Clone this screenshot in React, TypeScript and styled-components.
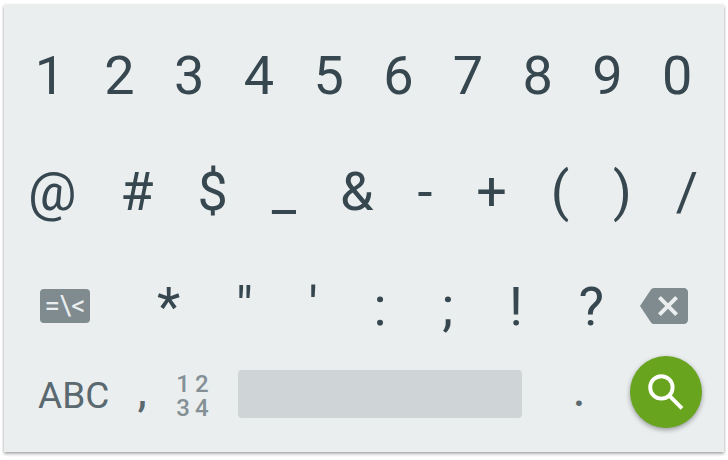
import React from "react";
import styled, { createGlobalStyle } from "styled-components";

const GlobalStyle = createGlobalStyle`
  * { box-sizing: border-box; }
  body {
    margin: 0;
    background: #ffffff;
    font-family: Roboto, "Liberation Sans", sans-serif;
  }
  button {
    margin: 0;
    padding: 0;
    border: 0;
    background: none;
    color: inherit;
    font: inherit;
    cursor: pointer;
  }
  svg { display: block; }
`;

const Keyboard = styled.main`
  display: flex;
  flex-direction: column;
  gap: 52px;
  margin: 5px 4px 8px;
  padding: 39px 0 24px;
  background: #eaeeef;
  color: #37474f;
  box-shadow: 0 2px 3px rgba(0, 0, 0, 0.3), 0 0 3px rgba(0, 0, 0, 0.14);
`;

const DigitRow = styled.div`
  display: grid;
  grid-template-columns: repeat(10, 1fr);
  padding: 0 12px 0 11px;
`;

const SymbolRow = styled.div`
  display: flex;
  justify-content: space-between;
  padding: 0 26px 0 24px;
`;

const LowerRows = styled.div`
  display: flex;
  flex-direction: column;
  gap: 18px;
`;

const PunctuationRow = styled.div`
  display: flex;
  align-items: center;
  height: 62px;
  padding: 0 36px;
`;

const PunctuationKeys = styled.div`
  display: flex;
  flex: 1;
  justify-content: space-between;
  padding: 0 36px 0 67px;
`;

const Key = styled.button`
  font-size: 54px;
  line-height: 64px;
  text-align: center;
`;

const MoreSymbolsKey = styled.button`
  display: flex;
  align-items: center;
  justify-content: center;
  width: 50px;
  height: 34px;
  margin-bottom: 2px;
  border-radius: 4px;
  background: #7f8b8f;
  color: #eaeeef;
  font-size: 28px;
  line-height: 34px;
`;

const BackspaceKey = styled.button`
  margin-bottom: 2px;
  color: #7f8b8f;
`;

const BottomRow = styled.div`
  display: flex;
  align-items: center;
  height: 72px;
  padding: 0 22px 0 34px;
  color: #5a686f;
`;

const LettersKey = styled.button`
  padding-top: 8px;
  font-size: 37px;
  line-height: 48px;
`;

const MarkKey = styled.button`
  width: 24px;
  font-size: 42px;
  font-weight: 500;
  line-height: 48px;
`;

const CommaSlot = styled.div`
  margin: 0 22px 0 21px;
`;

const NumpadKey = styled.button`
  display: grid;
  grid-template-columns: 1fr 1fr;
  column-gap: 5px;
  padding-top: 8px;
  color: #849095;
  font-size: 24px;
  font-weight: 500;
  line-height: 24px;
`;

const SpaceKey = styled.button`
  flex: 1;
  height: 48px;
  margin: 4px 45px 0 29px;
  border-radius: 4px;
  background: #cfd4d7;
`;

const SearchKey = styled.button`
  display: flex;
  align-items: center;
  justify-content: center;
  width: 72px;
  height: 72px;
  margin-left: 39px;
  border-radius: 50%;
  background: #68a41d;
  color: #ffffff;
  box-shadow: 0 2px 5px rgba(0, 0, 0, 0.36);
`;

const digits = ["1", "2", "3", "4", "5", "6", "7", "8", "9", "0"];
const symbols = ["@", "#", "$", "_", "&", "-", "+", "(", ")", "/"];
const punctuation = ["*", '"', "'", ":", ";", "!", "?"];

const renderKeys = (keys: string[]) =>
  keys.map((k) => (
    <Key key={k} type="button">
      {k}
    </Key>
  ));

const BackspaceIcon = () => (
  <svg width="48" height="48" viewBox="0 0 24 24" fill="currentColor" aria-hidden="true">
    <path d="M22 3H7c-.69 0-1.23.35-1.59.88L0 12l5.41 8.11c.36.53.9.89 1.59.89h15c1.1 0 2-.9 2-2V5c0-1.1-.9-2-2-2zm-3 12.59L17.59 17 14 13.41 10.41 17 9 15.59 12.59 12 9 8.41 10.41 7 14 10.59 17.59 7 19 8.41 15.41 12 19 15.59z" />
  </svg>
);

const SearchIcon = () => (
  <svg
    width="48"
    height="48"
    viewBox="0 0 24 24"
    fill="none"
    stroke="currentColor"
    strokeWidth="1.95"
    aria-hidden="true"
  >
    <circle cx="9.7" cy="9.7" r="5.6" />
    <path d="M13.9 14.1l6.1 6.1" />
  </svg>
);

export default function App() {
  return (
    <>
      <GlobalStyle />
      <Keyboard aria-label="Symbol keyboard">
        <DigitRow>{renderKeys(digits)}</DigitRow>
        <SymbolRow>{renderKeys(symbols)}</SymbolRow>
        <LowerRows>
          <PunctuationRow>
            <MoreSymbolsKey type="button">{"=\\<"}</MoreSymbolsKey>
            <PunctuationKeys>{renderKeys(punctuation)}</PunctuationKeys>
            <BackspaceKey type="button" aria-label="Backspace">
              <BackspaceIcon />
            </BackspaceKey>
          </PunctuationRow>
          <BottomRow>
            <LettersKey type="button">ABC</LettersKey>
            <CommaSlot>
              <MarkKey type="button">,</MarkKey>
            </CommaSlot>
            <NumpadKey type="button">
              <span>1</span>
              <span>2</span>
              <span>3</span>
              <span>4</span>
            </NumpadKey>
            <SpaceKey type="button" aria-label="Space" />
            <MarkKey type="button">.</MarkKey>
            <SearchKey type="button" aria-label="Search">
              <SearchIcon />
            </SearchKey>
          </BottomRow>
        </LowerRows>
      </Keyboard>
    </>
  );
}
